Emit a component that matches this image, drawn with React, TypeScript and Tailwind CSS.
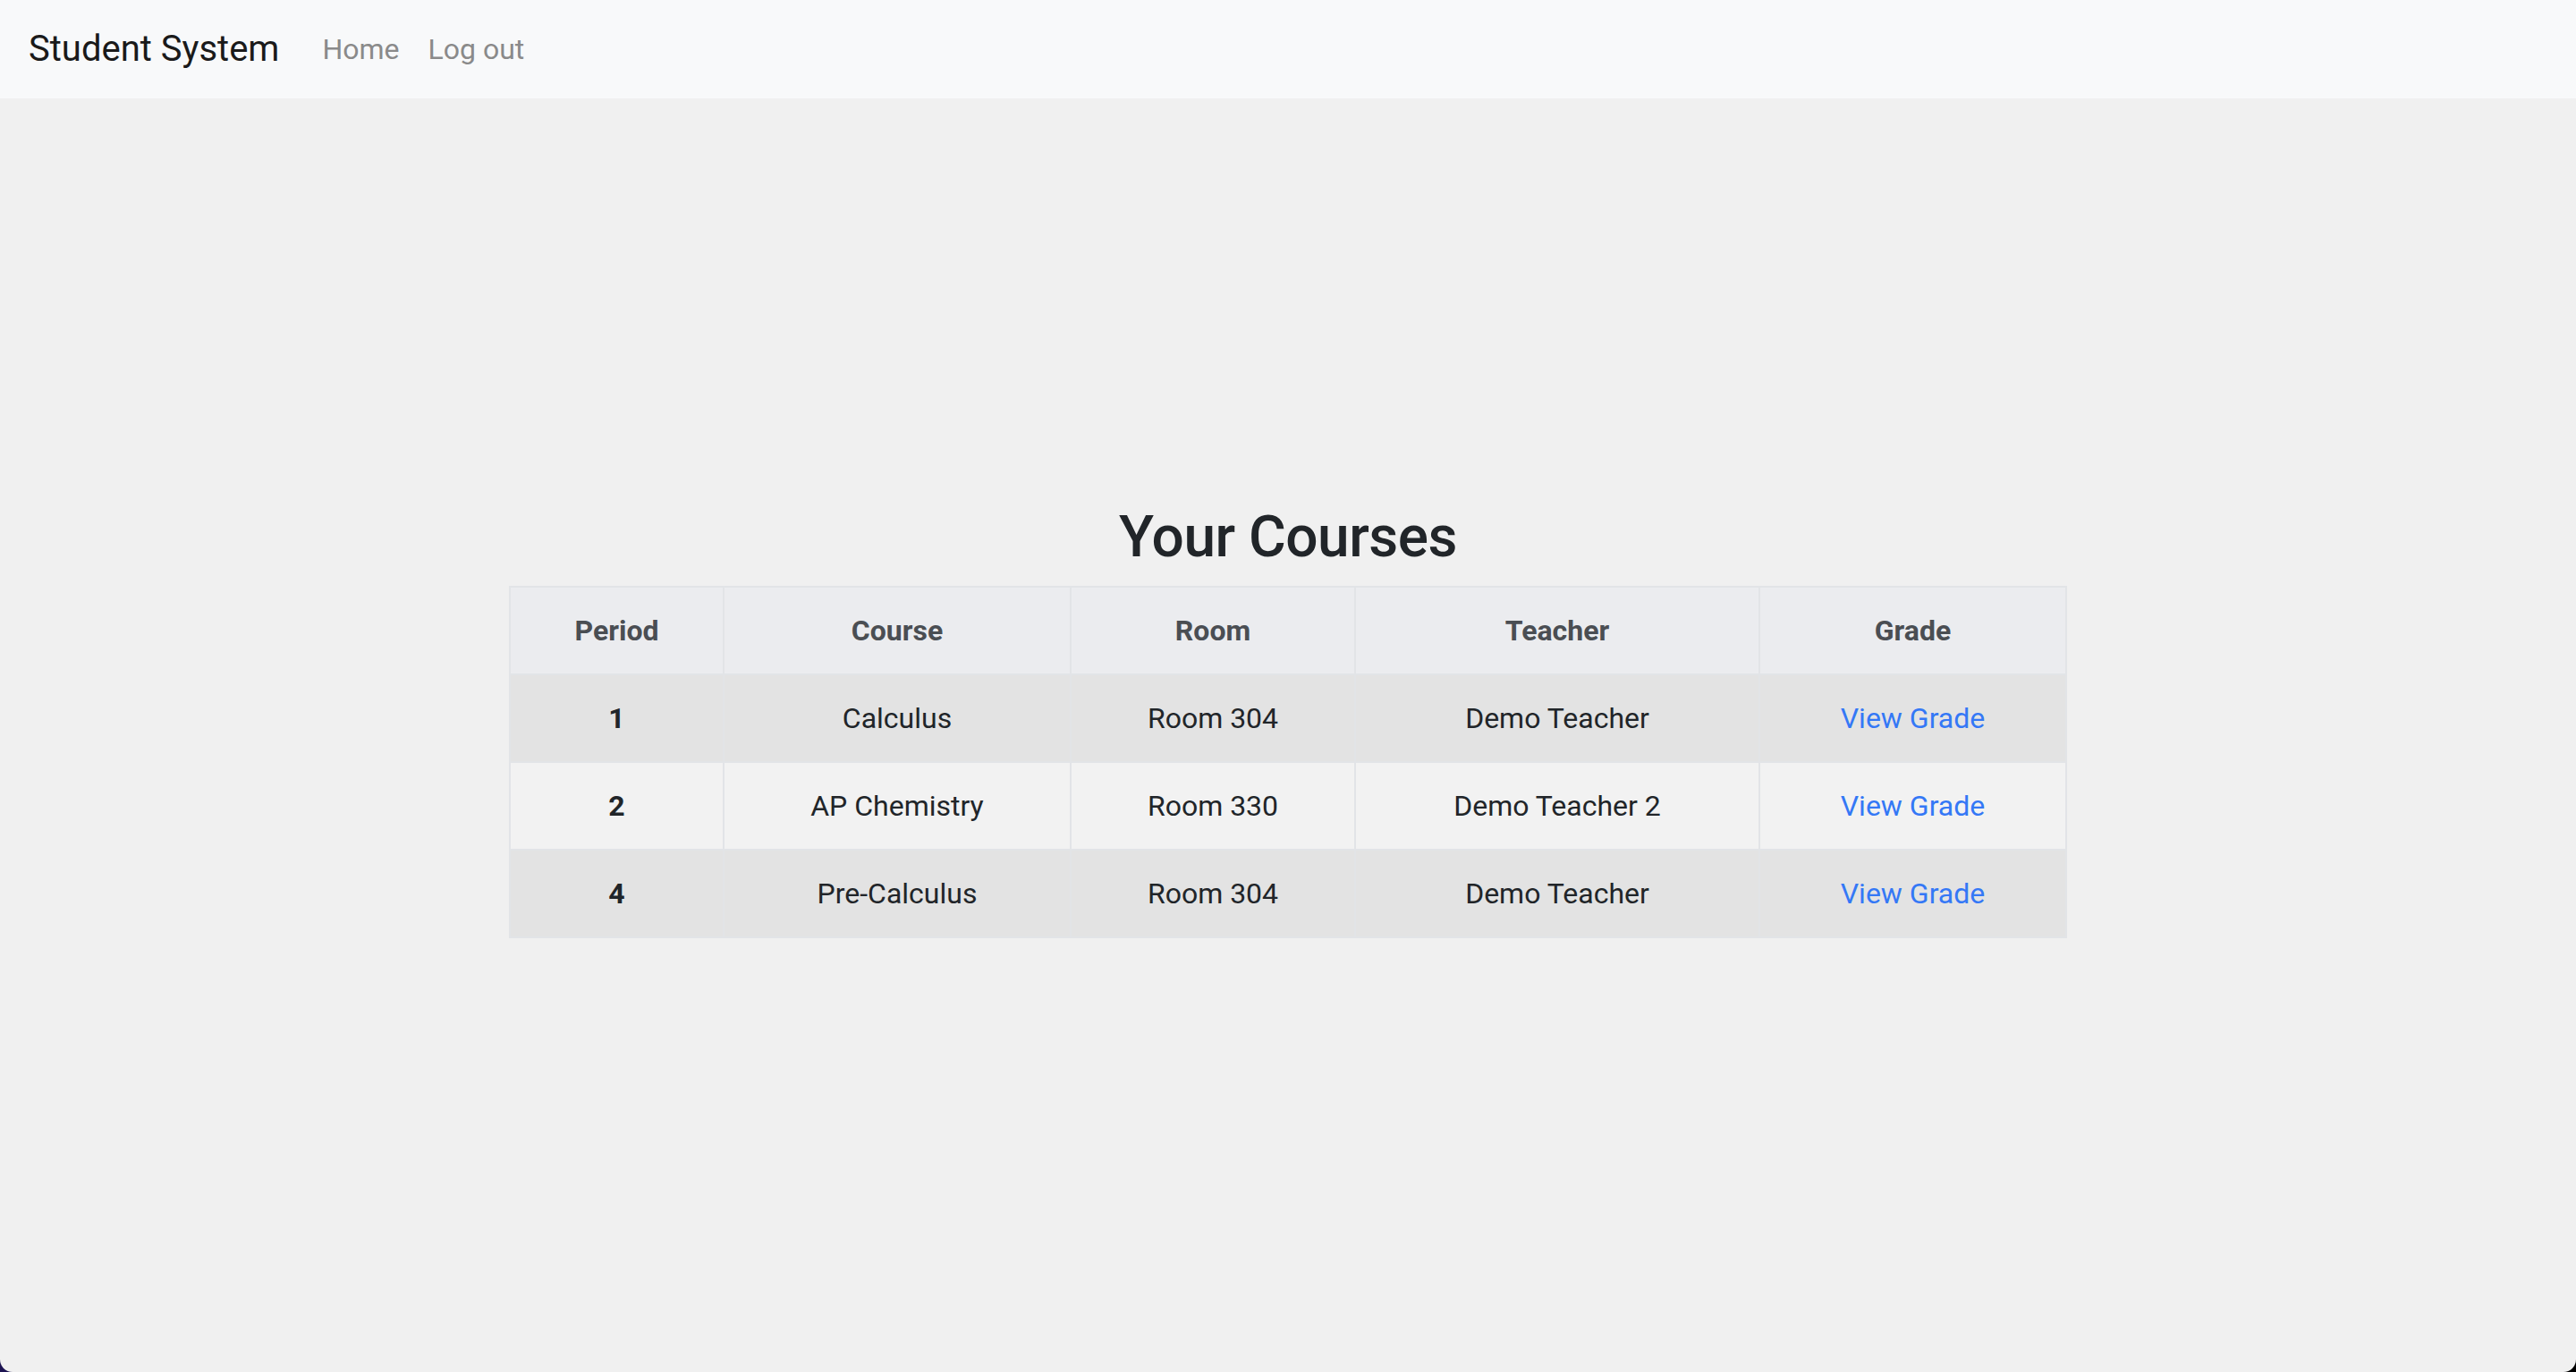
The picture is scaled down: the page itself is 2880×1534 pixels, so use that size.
import React from "react";

const rows = [
  { period: "1", course: "Calculus", room: "Room 304", teacher: "Demo Teacher", bg: "bg-[#e3e3e3]" },
  { period: "2", course: "AP Chemistry", room: "Room 330", teacher: "Demo Teacher 2", bg: "bg-[#f2f2f2]" },
  { period: "4", course: "Pre-Calculus", room: "Room 304", teacher: "Demo Teacher", bg: "bg-[#e3e3e3]" },
];

export default function App() {
  return (
    <div
      className="h-[1534px] w-full bg-gradient-to-r from-[#1d1452] to-[#000000]"
      style={{ fontFamily: "Roboto, 'Liberation Sans', Arial, sans-serif" }}
    >
      <div className="flex h-full flex-col overflow-hidden rounded-b-[14px] bg-[#f0f0f0]">
        <nav className="flex h-[110px] shrink-0 items-center bg-[#f8f9fa] pl-[32px]">
          <span className="mr-[32px] text-[40px] leading-[60px] text-[#1a1a1a]">Student System</span>
          <a className="px-[16px] text-[32px] leading-[48px] text-[#8a8a8a]">Home</a>
          <a className="px-[16px] text-[32px] leading-[48px] text-[#8a8a8a]">Log out</a>
        </nav>
        <main className="flex flex-col items-center pt-[452px]">
          <h2 className="mb-[16px] text-[64px] font-medium leading-[77px] tracking-[-0.5px] text-[#212529]">
            Your Courses
          </h2>
          <table className="w-[1740px] table-fixed border-collapse border-2 border-[#dfe1e4] text-[32px]">
            <colgroup>
              <col className="w-[239px]" />
              <col className="w-[388px]" />
              <col className="w-[318px]" />
              <col className="w-[452px]" />
              <col className="w-[343px]" />
            </colgroup>
            <thead>
              <tr className="h-[98px] bg-[#ebecef]">
                {["Period", "Course", "Room", "Teacher", "Grade"].map((h) => (
                  <th key={h} className="border-2 border-[#e2e4e7] text-center font-bold text-[#4a4e53]">
                    {h}
                  </th>
                ))}
              </tr>
            </thead>
            <tbody>
              {rows.map((r, i) => (
                <tr key={i} className={`h-[98px] ${r.bg}`}>
                  <th className="border-2 border-[#e2e4e7] text-center font-bold text-[#212529]">{r.period}</th>
                  <td className="border-2 border-[#e2e4e7] text-center text-[#212529]">{r.course}</td>
                  <td className="border-2 border-[#e2e4e7] text-center text-[#212529]">{r.room}</td>
                  <td className="border-2 border-[#e2e4e7] text-center text-[#212529]">{r.teacher}</td>
                  <td className="border-2 border-[#e2e4e7] text-center">
                    <a className="text-[#3478f6]">View Grade</a>
                  </td>
                </tr>
              ))}
            </tbody>
          </table>
        </main>
      </div>
    </div>
  );
}
